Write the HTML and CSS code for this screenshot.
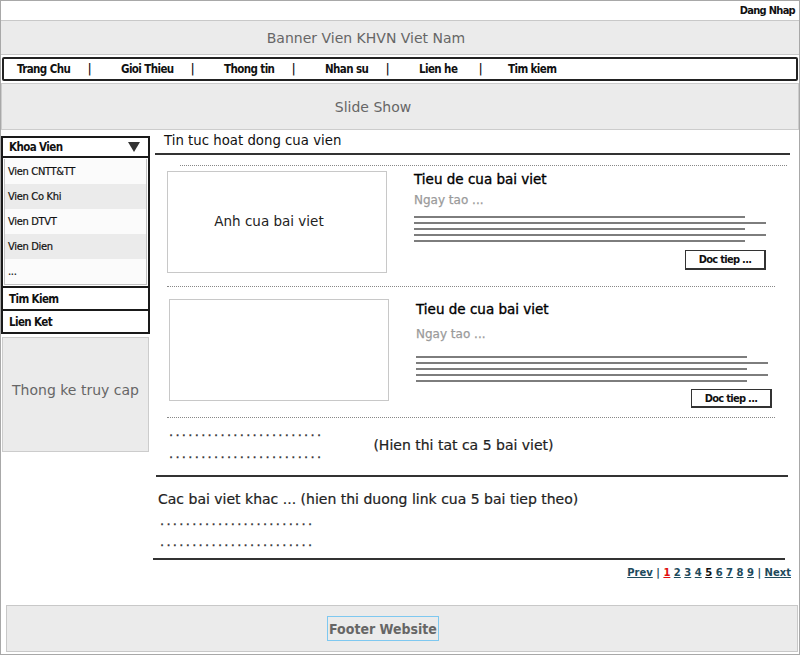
FILE: index.html
```html
<!DOCTYPE html>
<html lang="vi">
<head>
<meta charset="utf-8">
<title>Vien KHVN Viet Nam</title>
<link rel="stylesheet" href="styles.css">
</head>
<body>
<div class="page">
  <header class="topbar"><span class="login">Dang Nhap</span></header>
  <div class="banner">Banner Vien KHVN Viet Nam</div>
  <nav class="nav">
    <span class="nav-cell"><span class="nav-item">Trang Chu</span><span class="nav-sep">|</span></span>
    <span class="nav-cell"><span class="nav-item">Gioi Thieu</span><span class="nav-sep">|</span></span>
    <span class="nav-cell"><span class="nav-item">Thong tin</span><span class="nav-sep">|</span></span>
    <span class="nav-cell"><span class="nav-item">Nhan su</span><span class="nav-sep">|</span></span>
    <span class="nav-cell"><span class="nav-item">Lien he</span><span class="nav-sep">|</span></span>
    <span class="nav-cell"><span class="nav-item">Tim kiem</span></span>
  </nav>
  <div class="slideshow">Slide Show</div>

  <div class="content">
    <aside class="sidebar">
      <div class="side-menu">
        <div class="dropdown"><span>Khoa Vien</span><span class="caret"></span></div>
        <div class="dropdown-list">
          <ul class="list-inner">
            <li class="list-item">Vien CNTT&amp;TT</li>
            <li class="list-item list-item--alt">Vien Co Khi</li>
            <li class="list-item">Vien DTVT</li>
            <li class="list-item list-item--alt">Vien Dien</li>
            <li class="list-item">...</li>
          </ul>
        </div>
        <div class="side-link">Tim Kiem</div>
        <div class="side-link">Lien Ket</div>
      </div>
      <div class="stats">Thong ke truy cap</div>
    </aside>

    <main class="main">
      <h2 class="section-title">Tin tuc hoat dong cua vien</h2>
      <div class="dotted dotted--first"></div>

      <article class="article">
        <div class="thumb">Anh cua bai viet</div>
        <div class="article-body">
          <h3 class="article-title">Tieu de cua bai viet</h3>
          <div class="article-date">Ngay tao ...</div>
          <div class="text-lines">
            <span class="tl"></span><span class="tl tl--long"></span><span class="tl"></span><span class="tl tl--long"></span><span class="tl"></span>
          </div>
          <div class="read-more-row"><span class="read-more">Doc tiep ...</span></div>
        </div>
      </article>
      <div class="dotted"></div>

      <article class="article article--alt">
        <div class="thumb"></div>
        <div class="article-body">
          <h3 class="article-title">Tieu de cua bai viet</h3>
          <div class="article-date">Ngay tao ...</div>
          <div class="text-lines">
            <span class="tl"></span><span class="tl tl--long"></span><span class="tl"></span><span class="tl tl--long"></span><span class="tl"></span>
          </div>
          <div class="read-more-row"><span class="read-more">Doc tiep ...</span></div>
        </div>
      </article>
      <div class="dotted dotted--tight"></div>

      <div class="summary">
        <div class="dots-col">
          <div class="dots">........................</div>
          <div class="dots">........................</div>
        </div>
        <div class="summary-text">(Hien thi tat ca 5 bai viet)</div>
      </div>

      <div class="rule"></div>
      <div class="others">
        <div class="others-title">Cac bai viet khac ... (hien thi duong link cua 5 bai tiep theo)</div>
        <div class="dots">........................</div>
        <div class="dots">........................</div>
      </div>
      <div class="rule rule--second"></div>

      <div class="pager">
        <a class="pg">Prev</a> | <a class="pg pg--current">1</a> <a class="pg">2</a> <a class="pg">3</a> <a class="pg">4</a> <a class="pg pg--visited">5</a> <a class="pg">6</a> <a class="pg">7</a> <a class="pg">8</a> <a class="pg">9</a> | <a class="pg">Next</a>
      </div>
    </main>
  </div>

  <footer class="footer"><span class="footer-label">Footer Website</span></footer>
</div>
</body>
</html>
```

FILE: styles.css
```css
* {
  box-sizing: border-box;
  margin: 0;
  padding: 0;
}

body {
  margin: 0;
  background: #ffffff;
  font-family: "DejaVu Sans", "Open Sans", sans-serif;
  color: #111;
}

.page {
  width: 800px;
  height: 655px;
  border: 1px solid #a8a8a8;
  display: flex;
  flex-direction: column;
  overflow: hidden;
}

/* top bar */
.topbar {
  height: 19px;
  display: flex;
  justify-content: flex-end;
  align-items: center;
  padding-right: 4px;
}

.login,
.nav,
.dropdown,
.list-item,
.side-link,
.read-more,
.footer-label {
  font-family: "DejaVu Sans Condensed", sans-serif;
  white-space: nowrap;
}

.login {
  font-weight: bold;
  font-size: 11px;
  letter-spacing: -0.7px;
  color: #111;
}

/* banner */
.banner {
  height: 35px;
  background: #ebebeb;
  border-top: 1px solid #c8c8c8;
  border-bottom: 1px solid #c8c8c8;
  display: flex;
  align-items: center;
  justify-content: center;
  padding-right: 68px;
  font-size: 14px;
  color: #666;
}

/* navigation */
.nav {
  height: 24px;
  margin: 2px 1px 0 1px;
  border: 2px solid #222;
  border-radius: 2px;
  display: grid;
  grid-template-columns: 104px 103px 101px 94px 89px auto;
  align-items: center;
  padding-left: 13px;
  font-weight: bold;
  font-size: 11.5px;
  letter-spacing: -0.6px;
  color: #111;
}

.nav-cell {
  display: flex;
  justify-content: space-between;
}

.nav-sep {
  padding-right: 30px;
}

.nav-cell:nth-child(5) .nav-sep {
  padding-right: 26px;
}

/* slideshow */
.slideshow {
  height: 47px;
  margin-top: 2px;
  background: #ebebeb;
  border: 1px solid #cccccc;
  display: flex;
  align-items: center;
  justify-content: center;
  padding-right: 54px;
  font-size: 14px;
  color: #666;
}

/* content */
.content {
  flex: 1;
  display: grid;
  grid-template-columns: 150px 1fr;
  min-height: 0;
}

/* sidebar */
.sidebar {
  padding-top: 6px;
}

.side-menu {
  width: 149px;
  border: 2px solid #1a1a1a;
}

.dropdown {
  height: 20px;
  border-bottom: 2px solid #1a1a1a;
  display: flex;
  align-items: center;
  justify-content: space-between;
  padding: 0 8px 0 6px;
  font-weight: bold;
  font-size: 11.5px;
  letter-spacing: -0.6px;
}

.caret {
  width: 0;
  height: 0;
  border-left: 6px solid transparent;
  border-right: 6px solid transparent;
  border-top: 10px solid #333;
}

.dropdown-list {
  padding: 1px;
}

.list-inner {
  list-style: none;
  border: 1px solid #c2c2c2;
  border-top: none;
}

.list-item {
  height: 25px;
  display: flex;
  align-items: center;
  padding-left: 3px;
  font-size: 11px;
  letter-spacing: -0.3px;
  color: #111;
  background: #fbfbfb;
  -webkit-text-stroke: 0.2px #111;
}

.list-item--alt {
  background: #ebebeb;
}

.side-link {
  height: 23px;
  border-top: 2px solid #1a1a1a;
  display: flex;
  align-items: center;
  padding-left: 6px;
  font-weight: bold;
  font-size: 11.5px;
  letter-spacing: -0.6px;
}

.stats {
  margin: 3px 0 0 1px;
  width: 147px;
  height: 115px;
  background: #ebebeb;
  border: 1px solid #cccccc;
  display: flex;
  align-items: center;
  justify-content: center;
  padding-bottom: 10px;
  font-size: 14px;
  color: #666;
}

/* main column */
.main {
  margin: 0 9px 0 4px;
  display: flex;
  flex-direction: column;
}

.section-title {
  font-weight: normal;
  font-size: 13.3px;
  line-height: 21px;
  height: 25px;
  padding: 0 0 0 9px;
  border-bottom: 2px solid #333;
}

.dotted {
  height: 1px;
  margin: 13px 15px 0 12px;
  border-top: 1px dotted #888;
}

.dotted--first {
  margin: 10px 3px 0 25px;
}

.dotted--tight {
  margin-top: 9px;
}

.article {
  display: flex;
  margin-top: 5px;
  padding-left: 12px;
}

.thumb {
  width: 220px;
  height: 102px;
  border: 1px solid #c8c8c8;
  display: flex;
  align-items: center;
  justify-content: center;
  padding: 0 16px 3px 0;
  font-size: 13.5px;
  color: #222;
}

.article-body {
  margin-left: 27px;
  width: 352px;
}

.article-title {
  font-size: 13.5px;
  font-weight: normal;
  line-height: 16px;
  color: #000;
  -webkit-text-stroke: 0.35px #000;
}

.article-date {
  margin-top: 5px;
  font-size: 12px;
  line-height: 16px;
  color: #9a9a9a;
  -webkit-text-stroke: 0.25px #9a9a9a;
}

.text-lines {
  margin-top: 8px;
  display: flex;
  flex-direction: column;
  gap: 4px;
}

.tl {
  display: block;
  height: 2px;
  width: 331px;
  background: #7d7d7d;
}

.tl--long {
  width: 352px;
}

.read-more-row {
  margin-top: 8px;
  display: flex;
  justify-content: flex-end;
}

.read-more {
  width: 81px;
  height: 20px;
  border: 1px solid #333;
  border-right-width: 2px;
  border-bottom-width: 2px;
  display: flex;
  align-items: center;
  justify-content: center;
  font-size: 11px;
  letter-spacing: -0.7px;
  font-weight: bold;
  color: #111;
  background: #fff;
}

.article--alt {
  margin-top: 12px;
  padding-left: 14px;
}

.article--alt .article-title {
  margin-top: 2px;
}

.article--alt .article-date {
  margin-top: 9px;
}

.article--alt .text-lines {
  margin-top: 14px;
}

.article--alt .read-more-row {
  margin-right: -4px;
  margin-top: 7px;
}

.article--alt .read-more {
  height: 19px;
}

/* summary */
.summary {
  margin-top: 3px;
  padding-left: 14px;
  display: flex;
  align-items: center;
}

.dots {
  font-size: 13px;
  line-height: 22px;
  letter-spacing: 2.3px;
  color: #333;
  -webkit-text-stroke: 0.3px #333;
}

.summary-text {
  margin: 3px 0 0 50px;
  font-size: 14px;
  color: #222;
  -webkit-text-stroke: 0.2px #222;
}

.rule {
  margin: 10px 2px 0 1px;
  height: 2px;
  background: #333;
}

.rule--second {
  margin: 6px 5px 0 -2px;
}

.others {
  margin-top: 11px;
  padding-left: 3px;
}

.others-title {
  font-size: 14px;
  line-height: 22px;
  color: #222;
  -webkit-text-stroke: 0.2px #222;
}

.others .dots {
  line-height: 21px;
  padding-left: 2px;
}

/* pager */
.pager {
  margin: 6px -1px 0 0;
  text-align: right;
  font-family: "DejaVu Sans", sans-serif;
  font-size: 10px;
  font-weight: bold;
  line-height: 14px;
  color: #1e4a5c;
}

.pg {
  color: #1e4a5c;
  text-decoration: underline;
}

.pg--current {
  color: #e01010;
}

.pg--visited {
  color: #111;
}

/* footer */
.footer {
  height: 47px;
  margin: 0 1px 2px 5px;
  background: #ebebeb;
  border: 1px solid #c8c8c8;
  display: flex;
  align-items: center;
  justify-content: center;
  padding-right: 38px;
}

.footer-label {
  width: 112px;
  height: 25px;
  border: 1px solid #7ec8f0;
  display: flex;
  align-items: center;
  justify-content: center;
  font-size: 14px;
  font-weight: bold;
  color: #666;
}
```
